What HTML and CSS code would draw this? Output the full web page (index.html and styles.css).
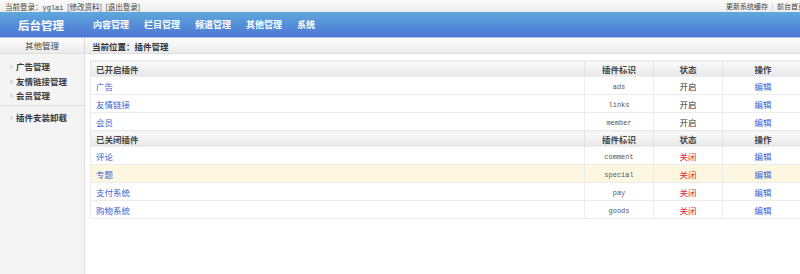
FILE: index.html
```html
<html>
<head>
  <meta charset="UTF-8">
  <title>插件管理</title>
  <link rel="stylesheet" href="styles.css">
</head>
<body>

  <div class="topbar">
    <div class="login">当前登录：<span class="mono">yglai</span> &nbsp;[修改资料] &nbsp;[退出登录]</div>
    <div class="toplinks">更新系统缓存 <span class="sep">|</span> 前台首页</div>
  </div>

  <div class="header">
    <div class="logo">后台管理</div>
    <ul class="nav">
      <li>内容管理</li>
      <li>栏目管理</li>
      <li>频道管理</li>
      <li>其他管理</li>
      <li>系统</li>
    </ul>
  </div>

  <div class="subbar">
    <div class="subtitle">其他管理</div>
    <div class="position">当前位置：插件管理</div>
  </div>

  <div class="main">
    <div class="sidebar">
      <ul class="menu">
        <li>广告管理</li>
        <li>友情链接管理</li>
        <li>会员管理</li>
      </ul>
      <ul class="menu menu-last">
        <li>插件安装卸载</li>
      </ul>
    </div>

    <div class="content">
      <table class="plugins">
        <tr class="head">
          <th class="c-name">已开启插件</th>
          <th class="c-id">插件标识</th>
          <th class="c-state">状态</th>
          <th class="c-op">操作</th>
        </tr>
        <tr><td class="c-name"><a>广告</a></td><td class="c-id">ads</td><td class="c-state">开启</td><td class="c-op"><a>编辑</a></td></tr>
        <tr><td class="c-name"><a>友情链接</a></td><td class="c-id">links</td><td class="c-state">开启</td><td class="c-op"><a>编辑</a></td></tr>
        <tr><td class="c-name"><a>会员</a></td><td class="c-id">member</td><td class="c-state">开启</td><td class="c-op"><a>编辑</a></td></tr>
        <tr class="head">
          <th class="c-name">已关闭插件</th>
          <th class="c-id">插件标识</th>
          <th class="c-state">状态</th>
          <th class="c-op">操作</th>
        </tr>
        <tr><td class="c-name"><a>评论</a></td><td class="c-id">comment</td><td class="c-state off">关闭</td><td class="c-op"><a>编辑</a></td></tr>
        <tr class="hover"><td class="c-name"><a>专题</a></td><td class="c-id">special</td><td class="c-state off">关闭</td><td class="c-op"><a>编辑</a></td></tr>
        <tr><td class="c-name"><a>支付系统</a></td><td class="c-id">pay</td><td class="c-state off">关闭</td><td class="c-op"><a>编辑</a></td></tr>
        <tr><td class="c-name"><a>购物系统</a></td><td class="c-id">goods</td><td class="c-state off">关闭</td><td class="c-op"><a>编辑</a></td></tr>
      </table>
    </div>
  </div>

</body>
</html>
```

FILE: styles.css
```css
body {
  margin: 0;
  width: 800px;
  height: 274px;
  overflow: hidden;
  font-family: "Noto Sans CJK SC", "Liberation Sans", sans-serif;
  font-size: 9px;
  color: #333;
  background-color: #fff;
}

ul {
  list-style: none;
  margin: 0;
  padding: 0;
}

.mono {
  font-family: "Liberation Mono", monospace;
  font-size: 7px;
}

/* barra superior */
.topbar {
  height: 12px;
  display: flex;
  justify-content: space-between;
  align-items: center;
  background: linear-gradient(#fbfbfb, #ececec);
  font-size: 7.5px;
  color: #444;
  white-space: nowrap;
}

.login {
  padding-left: 5px;
}

.toplinks {
  font-size: 7px;
  width: 74px;
  flex-shrink: 0;
}

.sep {
  color: #bbb;
  margin: 0 2px;
}

/* cabecera azul */
.header {
  height: 26px;
  display: flex;
  align-items: center;
  background: linear-gradient(#5fa8dc, #4b76d5);
  color: white;
  border-bottom: 1px solid #a9c4ee;
  box-sizing: border-box;
}

.logo {
  width: 93px;
  padding-left: 18px;
  box-sizing: border-box;
  font-size: 11.5px;
  font-weight: bold;
  flex-shrink: 0;
}

.nav {
  display: flex;
  font-size: 9px;
  font-weight: bold;
}

.nav li {
  width: 51px;
  flex-shrink: 0;
}

/* barra de posición */
.subbar {
  height: 16px;
  display: flex;
  align-items: center;
  background: linear-gradient(#fdfdfd, #ebebeb);
  border-bottom: 1px solid #dedede;
  box-sizing: border-box;
}

.subtitle {
  width: 84px;
  height: 100%;
  line-height: 15px;
  text-align: center;
  border-right: 1px solid #d8d8d8;
  color: #444;
  font-size: 8.5px;
}

.position {
  padding-left: 7px;
  font-weight: bold;
  color: #333;
  font-size: 8.5px;
}

/* cuerpo */
.main {
  display: flex;
  height: 220px;
}

.sidebar {
  width: 84px;
  background-color: #f4f4f4;
  border-right: 1px solid #dcdcdc;
  flex-shrink: 0;
}

.menu {
  padding: 5px 0 2px 0;
  border-bottom: 1px solid #dcdcdc;
}

.menu li {
  height: 14.5px;
  line-height: 14px;
  padding-left: 16px;
  position: relative;
  color: #3a3a3a;
  font-weight: bold;
  font-size: 8.5px;
}

.menu li::before {
  content: "›";
  position: absolute;
  left: 10px;
  color: #aaa;
  font-size: 8px;
}

.menu-last {
  border-bottom: none;
  padding-top: 4px;
}

.content {
  padding: 6px 0 0 5px;
}

/* tabla de plugins */
.plugins {
  width: 714px;
  border-collapse: collapse;
  border: 1px solid #e6e6e6;
  table-layout: fixed;
  font-family: "Noto Sans CJK SC", "Liberation Sans", sans-serif;
  font-size: 8.5px;
  color: #333;
}

.plugins th,
.plugins td {
  border: 1px solid #ececec;
  padding: 0 5px;
  white-space: nowrap;
}

.plugins th {
  height: 16px;
  background: linear-gradient(#fafafa, #e8e8e8);
  font-weight: bold;
  color: #444;
  border-left-color: #e2e2e2;
  border-right-color: #e2e2e2;
}

.plugins td {
  height: 18px;
}

.plugins .c-name {
  width: 483px;
  text-align: left;
}

.plugins .c-id {
  width: 58px;
  text-align: center;
}

.plugins td.c-id {
  font-family: "Liberation Mono", monospace;
  font-size: 7px;
  color: #555;
  padding-top: 2px;
}

.plugins .c-state {
  width: 58px;
  text-align: center;
}

.plugins .c-op {
  text-align: center;
}

.plugins a {
  color: #3d63d1;
}

.plugins .off {
  color: #e3262b;
}

.plugins .hover td {
  background-color: #fdf7e2;
}
```
